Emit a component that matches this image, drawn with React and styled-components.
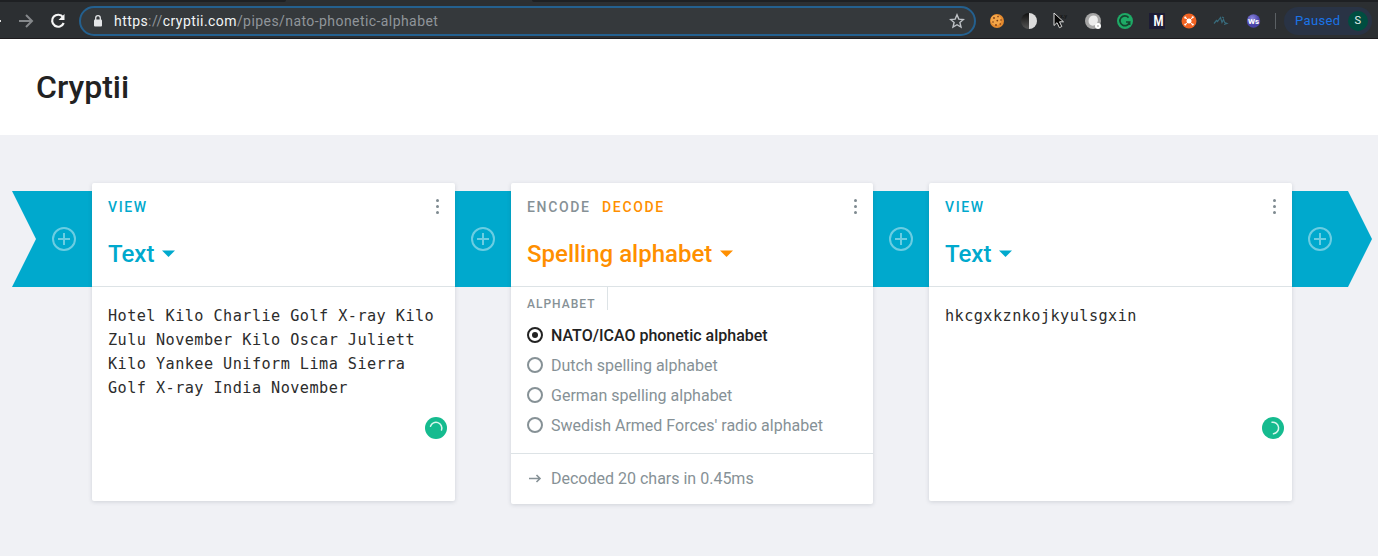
import React from "react";
import styled, { createGlobalStyle } from "styled-components";

const Global = createGlobalStyle`
  * { box-sizing: border-box; }
  body { margin: 0; background: #f0f1f5; font-family: Roboto, "Liberation Sans", sans-serif; color: #222; }
  svg { display: block; flex: none; }
`;

const BLUE = "#00a9cd";
const ORANGE = "#ff8f00";
const GREY = "#869196";

const Page = styled.div`
  height: 556px;
  overflow: hidden;
  background: #f0f1f5;
`;
const TabStrip = styled.div`
  display: flex;
  justify-content: space-between;
  height: 2px;
  background: #2c2f32;
`;
const TabEdge = styled.div`
  width: ${(p) => p.$width}px;
  background: #1e2023;
  border-radius: ${(p) => p.$radius};
`;
const Toolbar = styled.header`
  display: flex;
  align-items: center;
  height: 37px;
  padding-top: 1px;
  background: #2c2f32;
  border-bottom: 1px solid #1d1b1e;
`;
const NavIcons = styled.div`
  display: flex;
  align-items: center;
  gap: 16px;
  width: 79px;
`;
const AddressBar = styled.div`
  display: flex;
  align-items: center;
  width: 897px;
  height: 30px;
  padding: 0 9px 0 12px;
  border: 2px solid #24608f;
  border-radius: 15px;
  background: #35393c;
`;
const Url = styled.div`
  flex: 1;
  margin-left: 11px;
  font: 14px/20px Roboto, sans-serif;
  letter-spacing: 0.43px;
  color: #90959a;
  white-space: nowrap;
`;
const UrlStrong = styled.span`
  color: #f2f4f5;
`;
const Extensions = styled.div`
  display: flex;
  align-items: center;
  gap: 16px;
  margin-left: 13px;
`;
const Separator = styled.div`
  width: 1px;
  height: 16px;
  margin: 0 8px 0 14px;
  background: #5b6064;
`;
const Profile = styled.div`
  display: flex;
  align-items: center;
  justify-content: space-between;
  width: 88px;
  height: 28px;
  padding: 0 4px 0 11px;
  border-radius: 14px;
  background: #293345;
  color: #1a73e8;
  font-size: 13px;
  letter-spacing: 0.35px;
`;
const Avatar = styled.span`
  width: 20px;
  height: 20px;
  border-radius: 50%;
  background: #004d40;
  color: #e4efec;
  font-size: 11px;
  line-height: 20px;
  text-align: center;
`;

const Masthead = styled.div`
  height: 96px;
  padding: 28px 36px;
  background: #fff;
`;
const Brand = styled.h1`
  margin: 0;
  font-size: 32px;
  font-weight: 500;
  line-height: 40px;
  color: #222;
`;
const Pipe = styled.main`
  display: flex;
  align-items: flex-start;
  padding: 48px 6px 0 12px;
`;
const Segment = styled.div`
  display: flex;
  align-items: center;
  justify-content: center;
  flex: none;
  width: ${(p) => p.$width}px;
  height: 96px;
  margin-top: 8px;
  padding-left: ${(p) => p.$left || 0}px;
  padding-right: ${(p) => p.$right || 0}px;
  background: ${BLUE};
  clip-path: ${(p) => p.$clip || "none"};
`;
const Card = styled.section`
  flex: none;
  width: ${(p) => p.$width}px;
  height: ${(p) => p.$height}px;
  border-radius: 2px;
  background: #fff;
  box-shadow: 0 1px 4px rgba(30, 40, 60, 0.15);
  z-index: 1;
`;
const CardHeader = styled.div`
  height: 104px;
  padding: 14px 16px 0;
  border-bottom: 1px solid #dde3e6;
`;
const ModeRow = styled.div`
  display: flex;
  align-items: center;
  gap: 11.5px;
  height: 20px;
`;
const Mode = styled.span`
  color: ${(p) => p.$color};
  font-size: 14px;
  font-weight: 500;
  letter-spacing: 1.65px;
`;
const MenuDots = styled.div`
  display: flex;
  flex-direction: column;
  gap: 3px;
  width: 3px;
  margin-left: auto;
  padding-bottom: 1px;
`;
const Dot = styled.i`
  width: 3px;
  height: 3px;
  border-radius: 50%;
  background: #7e8a90;
`;
const BrickTitle = styled.h2`
  display: flex;
  align-items: center;
  gap: 7.5px;
  margin: 21px 0 0;
  color: ${(p) => p.$color};
  font-size: 24px;
  font-weight: 500;
  line-height: 32px;
`;
const TextArea = styled.div`
  padding: 17px 16px 0;
  color: #2c2c2c;
  font-family: "DejaVu Sans Mono", "Liberation Mono", monospace;
  font-size: 15.2px;
  letter-spacing: 0.45px;
  line-height: 24px;
  height: 130px;
  white-space: pre;
`;
const Assistant = styled.div`
  display: flex;
  justify-content: flex-end;
  padding-right: 8px;
`;
const FieldLabel = styled.div`
  width: 97px;
  height: 23px;
  padding: 7px 0 0 16px;
  border-right: 1px solid #dde3e6;
  color: ${GREY};
  font-size: 12px;
  font-weight: 500;
  letter-spacing: 1px;
  line-height: 20px;
`;
const Options = styled.div`
  height: 143px;
  padding: 10px 16px 0;
`;
const Option = styled.div`
  display: flex;
  align-items: center;
  gap: 8px;
  height: 30px;
  color: ${(p) => (p.$selected ? "#222" : GREY)};
  font-size: 16px;
  font-weight: ${(p) => (p.$selected ? 500 : 400)};
  white-space: nowrap;
`;
const Radio = styled.span`
  display: flex;
  align-items: center;
  justify-content: center;
  width: 16px;
  height: 16px;
  border: 2px solid currentColor;
  border-radius: 50%;
`;
const RadioDot = styled.span`
  width: 6px;
  height: 6px;
  border-radius: 50%;
  background: currentColor;
`;
const Status = styled.footer`
  display: flex;
  align-items: center;
  gap: 8px;
  height: 51px;
  padding: 0 16px 2px;
  border-top: 1px solid #dde3e6;
  color: ${GREY};
  font-size: 16px;
`;

const Plus = () => (
  <svg width="24" height="24" fill="none" stroke="#fff" strokeOpacity=".42" strokeWidth="2">
    <circle cx="12" cy="12" r="11" />
    <path d="M12 6v12M6 12h5M13 12h5" />
  </svg>
);
const Caret = () => (
  <svg width="13" height="9" fill="currentColor"><path d="M0 .5h13L6.5 7z" /></svg>
);
const Spinner = ({ d }) => (
  <svg width="22" height="22" fill="none">
    <circle cx="11" cy="11" r="11" fill="#15bb8f" />
    <path d={d} stroke="#d9f7ed" strokeWidth="1.5" strokeLinecap="round" />
  </svg>
);

const ExtensionIcons = () => (
  <Extensions>
    <svg width="16" height="16">
      <circle cx="8" cy="8" r="7" fill="#e58a2e" />
      <circle cx="7" cy="7" r="5.3" fill="#f3a548" />
      <g fill="#7a3a15"><circle cx="5" cy="5" r=".9" /><circle cx="9" cy="3.6" r=".8" /><circle cx="8.3" cy="7.6" r=".9" /><circle cx="4" cy="9" r=".8" /><circle cx="12" cy="7" r=".8" /><circle cx="7" cy="12" r=".9" /><circle cx="11.3" cy="11" r=".8" /></g>
    </svg>
    <svg width="16" height="16">
      <defs><linearGradient id="half" x2="0" y2="1"><stop stopColor="#111" /><stop offset="1" stopColor="#555" /></linearGradient></defs>
      <path d="M8 0a8 8 0 0 0 0 16z" fill="url(#half)" /><path d="M8 0a8 8 0 0 1 0 16z" fill="#dcdcdc" />
    </svg>
    <svg width="16" height="16" overflow="visible">
      <path d="M1 0v12.5l3-2.8 2.4 5 2.4-1.2-2.3-4.7h4z" fill="#080808" stroke="#ddd" strokeWidth="1" />
      <text x="7" y="5" fontSize="6" fill="#111" fontFamily="Roboto">x,y</text>
    </svg>
    <svg width="16" height="16" overflow="visible">
      <circle cx="8" cy="8" r="8" fill="#a5a5a5" /><ellipse cx="8" cy="7.5" rx="4.6" ry="5.2" fill="#ececec" transform="rotate(25 8 8)" /><circle cx="13" cy="13" r="3" fill="#fff" /><circle cx="13" cy="13" r="1" fill="#bbb" />
    </svg>
    <svg width="16" height="16" fill="none">
      <circle cx="8" cy="8" r="8" fill="#1eaa66" />
      <path d="M11.6 4.6A4.9 4.9 0 1 0 12.6 9H9M12.6 9v3" stroke="#15452f" strokeWidth="1.7" />
    </svg>
    <svg width="16" height="16">
      <rect width="16" height="16" fill="#1d1c35" />
      <text x="9.5" y="13" fontSize="14" fontWeight="700" fill="#fff" textAnchor="middle" fontFamily="Roboto" textLength="10" lengthAdjust="spacingAndGlyphs">M</text>
    </svg>
    <svg width="16" height="16">
      <circle cx="8" cy="8" r="7.5" fill="#f26322" />
      <path d="M4 4l8 8M12 4l-8 8" stroke="#fff" strokeWidth=".9" /><circle cx="8" cy="8" r="2.5" fill="#fff" />
      <g fill="#fff"><circle cx="4.3" cy="4.7" r="1.1" /><circle cx="11.7" cy="4.3" r="1.1" /><circle cx="4.3" cy="11.5" r="1.1" /><circle cx="11.7" cy="11.5" r="1.1" /></g>
    </svg>
    <svg width="16" height="16" fill="none" stroke="#386a7b" strokeWidth="1.2">
      <path d="M1 10.5l2.5-3 1 1 3-4 1.5 5 1.5-3 1.2 3 2.3 1-3 1M9 4l2 1" />
    </svg>
    <svg width="16" height="16">
      <defs><radialGradient id="ws" cx=".4" cy=".3"><stop stopColor="#8c88df" /><stop offset="1" stopColor="#4a43a8" /></radialGradient></defs>
      <circle cx="8.5" cy="8" r="6.7" fill="url(#ws)" />
      <text x="8.5" y="11" fontSize="8" fontWeight="700" fill="#fff" textAnchor="middle" fontFamily="Roboto">Ws</text>
    </svg>
  </Extensions>
);

function ViewCard({ text, arc }) {
  return (
    <Card $width={363} $height={318}>
      <CardHeader>
        <ModeRow><Mode $color={BLUE}>VIEW</Mode><MenuDots><Dot /><Dot /><Dot /></MenuDots></ModeRow>
        <BrickTitle $color={BLUE}>Text<Caret /></BrickTitle>
      </CardHeader>
      <TextArea>{text}</TextArea>
      <Assistant><Spinner d={arc} /></Assistant>
    </Card>
  );
}

const alphabets = [
  "NATO/ICAO phonetic alphabet",
  "Dutch spelling alphabet",
  "German spelling alphabet",
  "Swedish Armed Forces' radio alphabet",
];

export default function App() {
  return (
    <Page>
      <Global />
      <TabStrip>
        <TabEdge $width={286} $radius="0 0 2px 0" />
        <TabEdge $width={846} $radius="0 0 0 2px" />
      </TabStrip>
      <Toolbar>
        <NavIcons>
          <svg width="2" height="16"><path d="M0 8h1" stroke="#ddd" strokeWidth="2" /></svg>
          <svg width="16" height="16" fill="none" stroke="#85888b" strokeWidth="2"><path d="M1 8h13M8 2l6 6-6 6" /></svg>
          <svg width="16" height="16" fill="none" stroke="#f5f5f5" strokeWidth="2.2"><path d="M13 4.2A6 6 0 1 0 13.7 10" /><path d="M14.5 1v6h-6z" fill="#f5f5f5" stroke="none" /></svg>
        </NavIcons>
        <AddressBar>
          <svg width="10" height="12" fill="none"><rect x="1" y="4.5" width="8" height="7" rx="1" fill="#e4e6e8" /><path d="M2.7 5V3a2.3 2.3 0 0 1 4.6 0v2" stroke="#e4e6e8" strokeWidth="1.3" /></svg>
          <Url><UrlStrong>https</UrlStrong>://<UrlStrong>cryptii.com</UrlStrong>/pipes/nato-phonetic-alphabet</Url>
          <svg width="16" height="16" fill="none" stroke="#bec2c6" strokeWidth="1.4"><path d="M8 1.8l1.8 4.3 4.6.4-3.5 3 1.1 4.6L8 11.7l-4 2.4 1.1-4.6-3.5-3 4.6-.4z" /></svg>
        </AddressBar>
        <ExtensionIcons />
        <Separator />
        <Profile>Paused<Avatar>S</Avatar></Profile>
      </Toolbar>
      <Masthead><Brand>Cryptii</Brand></Masthead>
      <Pipe>
        <Segment $width={80} $left={24} $clip="polygon(0 0, 100% 0, 100% 100%, 0 100%, 24px 50%)"><Plus /></Segment>
        <ViewCard
          text={"Hotel Kilo Charlie Golf X-ray Kilo\nZulu November Kilo Oscar Juliett\nKilo Yankee Uniform Lima Sierra\nGolf X-ray India November"}
          arc="M5.5 9.2A5.8 5.8 0 0 1 16.5 13"
        />
        <Segment $width={56}><Plus /></Segment>
        <Card $width={362} $height={321}>
          <CardHeader>
            <ModeRow>
              <Mode $color={GREY}>ENCODE</Mode><Mode $color={ORANGE}>DECODE</Mode>
              <MenuDots><Dot /><Dot /><Dot /></MenuDots>
            </ModeRow>
            <BrickTitle $color={ORANGE}>Spelling alphabet<Caret /></BrickTitle>
          </CardHeader>
          <FieldLabel>ALPHABET</FieldLabel>
          <Options>
            {alphabets.map((name, i) => (
              <Option key={name} $selected={i === 0}><Radio>{i === 0 && <RadioDot />}</Radio>{name}</Option>
            ))}
          </Options>
          <Status>
            <svg width="16" height="16" fill="none" stroke="currentColor" strokeWidth="1.6"><path d="M2 8.5h11M9.5 5L13 8.5 9.5 12" /></svg>
            Decoded 20 chars in 0.45ms
          </Status>
        </Card>
        <Segment $width={56}><Plus /></Segment>
        <ViewCard text="hkcgxkznkojkyulsgxin" arc="M10 5.2A5.8 5.8 0 0 1 11.5 16.8" />
        <Segment $width={80} $right={24} $clip="polygon(0 0, 56px 0, 100% 50%, 56px 100%, 0 100%)"><Plus /></Segment>
      </Pipe>
    </Page>
  );
}
